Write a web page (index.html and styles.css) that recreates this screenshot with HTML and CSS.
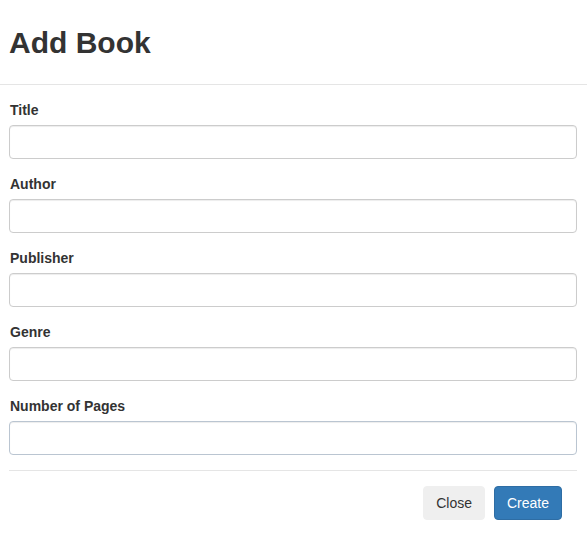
FILE: index.html
```html
<!DOCTYPE html>
<html>
<head>
<meta charset="utf-8">
<link rel="stylesheet" href="styles.css">
</head>
<body>
<div class="modal">
  <div class="modal-header">
    <h1 class="modal-title">Add Book</h1>
  </div>
  <form class="modal-body">
    <div class="form-group">
      <label class="label">Title</label>
      <input class="control" type="text">
    </div>
    <div class="form-group">
      <label class="label">Author</label>
      <input class="control" type="text">
    </div>
    <div class="form-group">
      <label class="label">Publisher</label>
      <input class="control" type="text">
    </div>
    <div class="form-group">
      <label class="label">Genre</label>
      <input class="control" type="text">
    </div>
    <div class="form-group">
      <label class="label">Number of Pages</label>
      <input class="control control-active" type="text">
    </div>
    <div class="modal-footer">
      <button type="button" class="btn btn-default">Close</button>
      <button type="button" class="btn btn-primary">Create</button>
    </div>
  </form>
</div>
</body>
</html>
```

FILE: styles.css
```css
* { box-sizing: border-box; }
html, body {
  margin: 0;
  padding: 0;
  background: #fff;
}
body {
  font-family: "Liberation Sans", Arial, sans-serif;
  font-size: 14px;
  line-height: 20px;
  color: #333;
}
.modal-header {
  padding: 26px 9px 25px;
  border-bottom: 1px solid #e5e5e5;
}
.modal-title {
  margin: 0;
  font-size: 30px;
  line-height: 33px;
  font-weight: bold;
  color: #333;
}
.modal-body {
  padding: 15px 10px 0 9px;
  margin: 0;
}
.form-group {
  margin-bottom: 15px;
}
.label {
  display: block;
  font-weight: bold;
  margin-bottom: 5px;
  padding-left: 1px;
}
.control {
  display: block;
  width: 100%;
  height: 34px;
  padding: 6px 12px;
  font-family: inherit;
  font-size: 14px;
  color: #555;
  background: #fff;
  border: 1px solid #ccc;
  border-radius: 4px;
  box-shadow: inset 0 1px 1px rgba(0,0,0,.075);
  outline: none;
}
.control-active {
  border-color: #bac5d1;
}
.modal-footer {
  border-top: 1px solid #e5e5e5;
  padding: 15px 15px 15px 0;
  display: flex;
  justify-content: flex-end;
  gap: 9px;
}
.btn {
  height: 34px;
  padding: 6px 12px;
  font-family: inherit;
  font-size: 14px;
  line-height: 20px;
  border-radius: 4px;
  border: 1px solid transparent;
  cursor: pointer;
}
.btn-default {
  background: #efefef;
  border-color: #efefef;
  color: #333;
}
.btn-primary {
  background: #337ab7;
  border-color: #2e6da4;
  color: #fff;
}
```
